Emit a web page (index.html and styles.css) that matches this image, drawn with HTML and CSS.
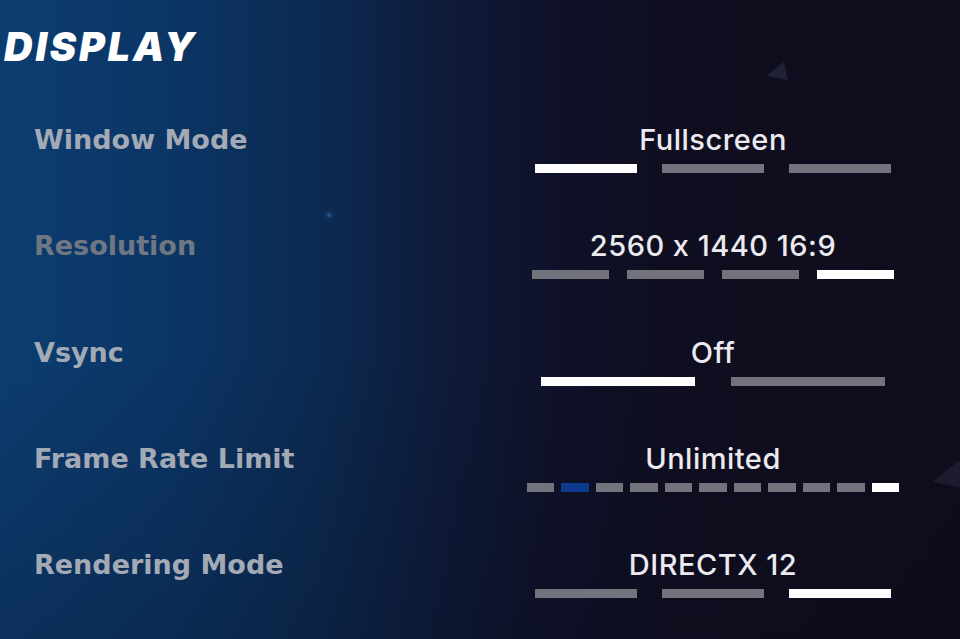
FILE: index.html
```html
<!DOCTYPE html>
<html>
<head>
<meta charset="utf-8">
<link rel="stylesheet" href="styles.css">
</head>
<body>
<div class="screen">
  <svg class="decor decor-a" width="30" height="22" viewBox="0 0 30 22"><polygon points="6,16 24,2 28,20" fill="#212136"/></svg>
  <svg class="decor decor-b" width="40" height="34" viewBox="0 0 40 34"><polygon points="4,24 32,2 36,30" fill="#1b1a2f"/></svg>
  <div class="decor dot"></div>
  <h1 class="title">DISPLAY</h1>
  <div class="rows">
    <div class="row">
      <div class="label">Window Mode</div>
      <div class="value">
        <div class="value-text">Fullscreen</div>
        <div class="bars bars-3">
          <span class="bar on"></span><span class="bar"></span><span class="bar"></span>
        </div>
      </div>
    </div>
    <div class="row">
      <div class="label dim">Resolution</div>
      <div class="value">
        <div class="value-text">2560 x 1440 16:9</div>
        <div class="bars bars-4">
          <span class="bar"></span><span class="bar"></span><span class="bar"></span><span class="bar on"></span>
        </div>
      </div>
    </div>
    <div class="row">
      <div class="label">Vsync</div>
      <div class="value">
        <div class="value-text">Off</div>
        <div class="bars bars-2">
          <span class="bar on"></span><span class="bar"></span>
        </div>
      </div>
    </div>
    <div class="row">
      <div class="label">Frame Rate Limit</div>
      <div class="value">
        <div class="value-text">Unlimited</div>
        <div class="bars bars-11">
          <span class="bar"></span><span class="bar blue"></span><span class="bar"></span><span class="bar"></span><span class="bar"></span><span class="bar"></span><span class="bar"></span><span class="bar"></span><span class="bar"></span><span class="bar"></span><span class="bar on"></span>
        </div>
      </div>
    </div>
    <div class="row">
      <div class="label">Rendering Mode</div>
      <div class="value">
        <div class="value-text">DIRECTX 12</div>
        <div class="bars bars-3">
          <span class="bar"></span><span class="bar"></span><span class="bar on"></span>
        </div>
      </div>
    </div>
  </div>
</div>
</body>
</html>
```
FILE: styles.css
```css
* { box-sizing: border-box; }
html, body { margin: 0; padding: 0; }
body {
  width: 960px;
  height: 639px;
  overflow: hidden;
  font-family: "Inter", "Liberation Sans", sans-serif;
}
.screen {
  position: relative;
  width: 960px;
  height: 639px;
  padding: 24px 0 0 0;
  background:
    linear-gradient(to bottom, rgba(0,0,0,0) 0%, rgba(0,0,0,0) 55%, rgba(8,10,25,0.25) 100%),
    linear-gradient(to right, #0c3d71 0%, #0b3565 18%, #0c2a52 33%, #0e1a38 47%, #0f1129 58%, #0f0e20 70%, #0f0d1c 100%);
}
.decor { position: absolute; }
.decor-a { left: 760px; top: 60px; }
.decor-b { left: 928px; top: 458px; }
.dot {
  left: 327px; top: 213px; width: 4px; height: 4px; border-radius: 50%;
  background: #24528a; box-shadow: 0 0 4px 2px rgba(36,82,138,0.45);
}
.title {
  margin: 0 0 0 4px;
  font-size: 39.5px;
  line-height: 46px;
  font-weight: 900;
  font-style: italic;
  color: #ffffff;
  letter-spacing: 2.9px;
}
.rows {
  margin-top: 52px;
  display: flex;
  flex-direction: column;
}
.row {
  height: 106.25px;
  display: grid;
  grid-template-columns: 1fr 420px;
  padding-left: 34px;
  padding-right: 37px;
  align-items: start;
}
.label {
  font-family: "DejaVu Sans", "Inter", sans-serif;
  font-size: 27px;
  line-height: 36px;
  font-weight: 700;
  color: #a3aab5;
}
.label.dim { color: #6f7782; }
.value {
  display: flex;
  flex-direction: column;
  align-items: center;
}
.value-text {
  font-size: 29px;
  line-height: 36px;
  font-weight: 500;
  color: #ebebef;
  letter-spacing: 0.5px;
}
.bars {
  margin-top: 6px;
  display: flex;
  height: 9px;
}
.bar { display: block; height: 9px; background: #73737d; }
.bar.on { background: #ffffff; }
.bar.blue { background: #0d3a8e; }
.bars-3 { gap: 25px; }
.bars-3 .bar { width: 102px; }
.bars-4 { gap: 18px; }
.bars-4 .bar { width: 77px; }
.bars-2 { gap: 36px; }
.bars-2 .bar { width: 154px; }
.bars-11 { gap: 7px; }
.bars-11 .bar { width: 27.5px; }
```
